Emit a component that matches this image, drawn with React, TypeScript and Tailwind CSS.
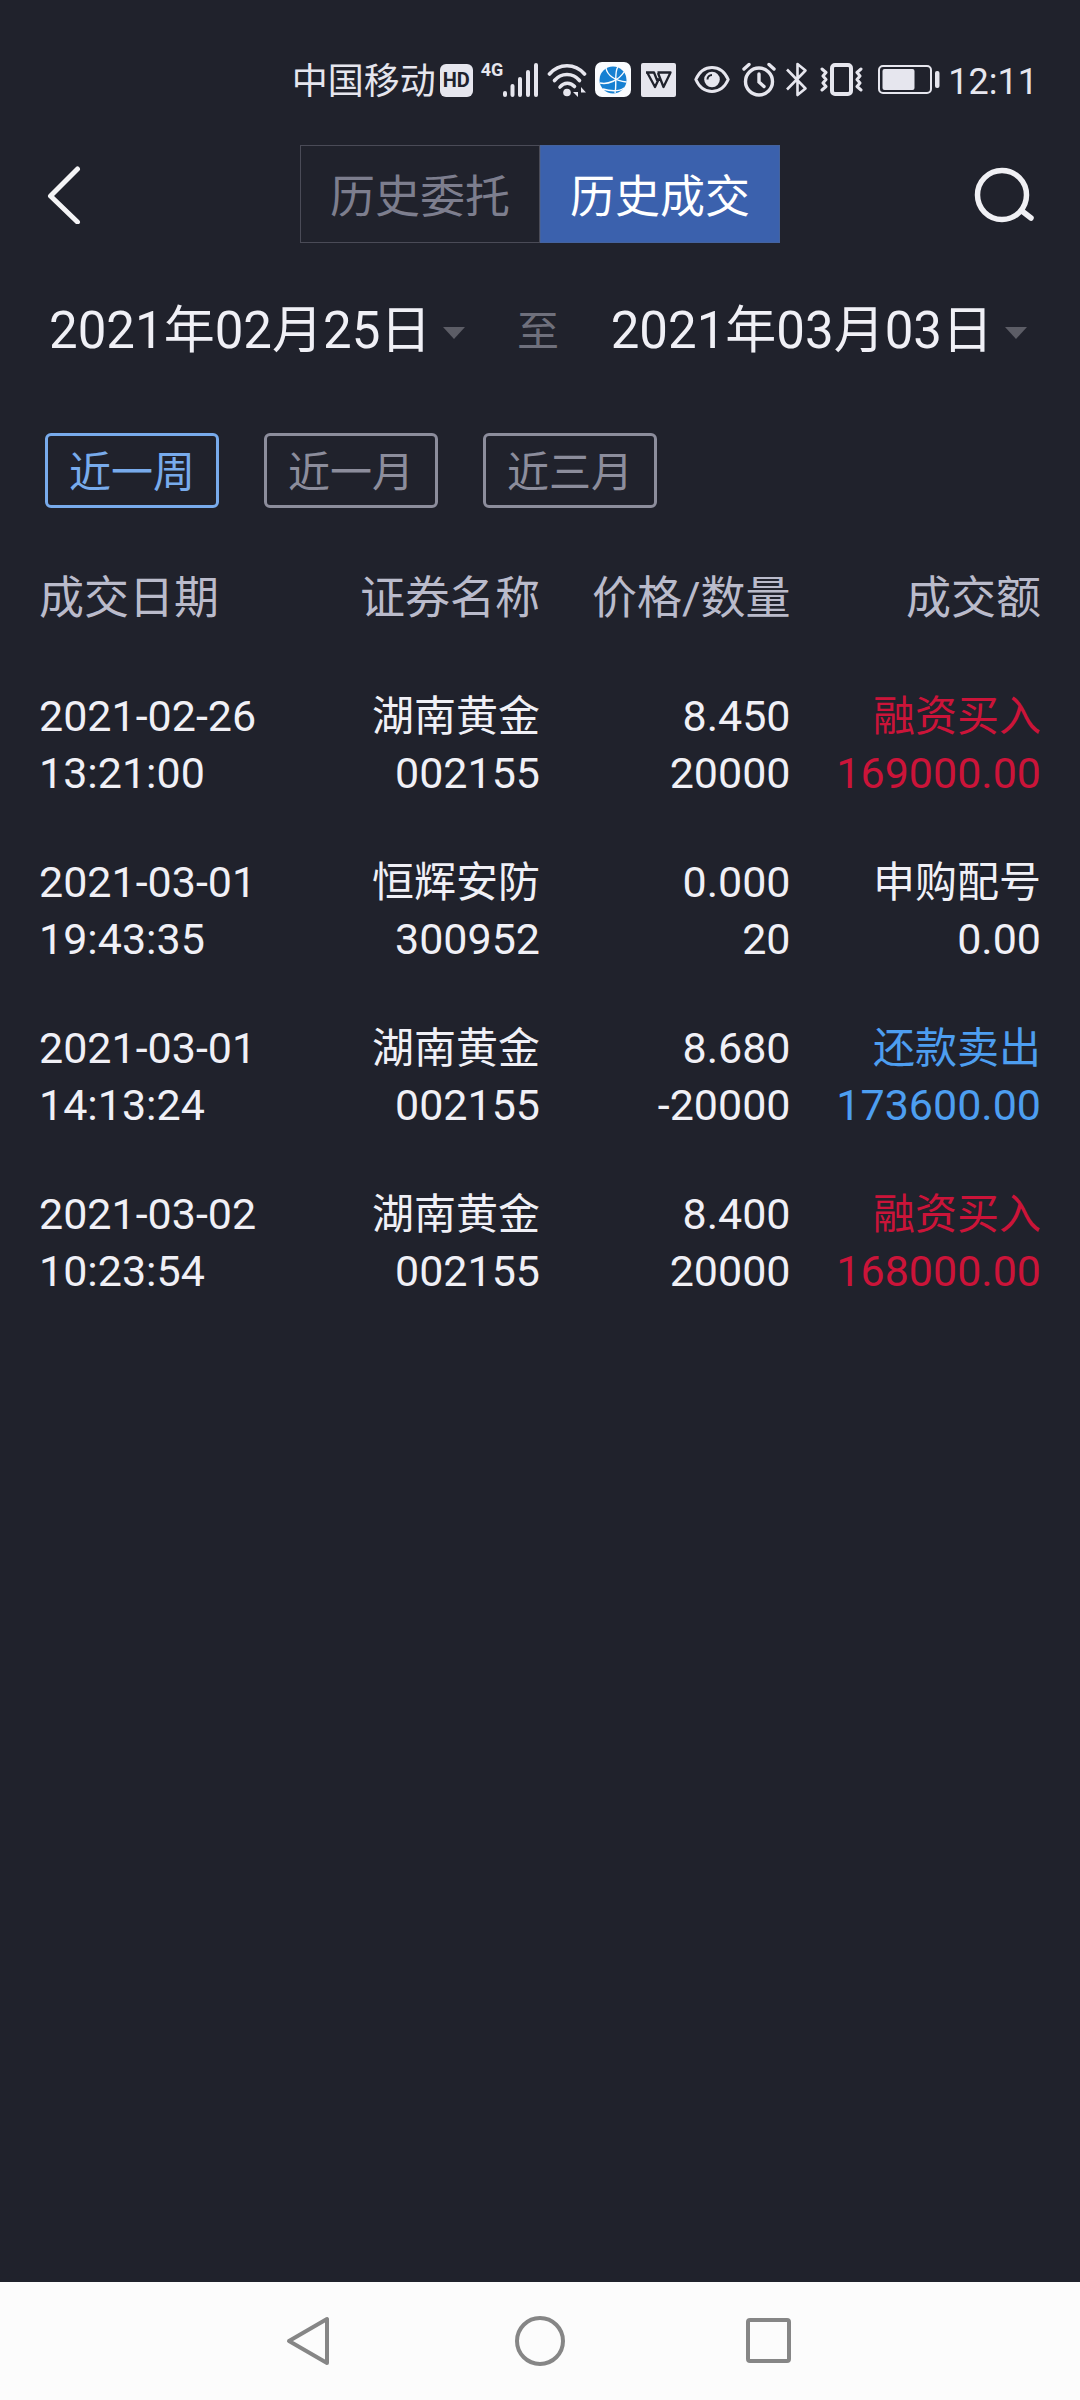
import { useState } from "react";
import clsx from "clsx";

type Tone = "buy" | "sell" | "plain";

interface Deal {
  date: string;
  time: string;
  name: string;
  code: string;
  price: string;
  count: string;
  action: string;
  amount: string;
  tone: Tone;
}

const deals: Deal[] = [
  { date: "2021-02-26", time: "13:21:00", name: "湖南黄金", code: "002155", price: "8.450", count: "20000", action: "融资买入", amount: "169000.00", tone: "buy" },
  { date: "2021-03-01", time: "19:43:35", name: "恒辉安防", code: "300952", price: "0.000", count: "20", action: "申购配号", amount: "0.00", tone: "plain" },
  { date: "2021-03-01", time: "14:13:24", name: "湖南黄金", code: "002155", price: "8.680", count: "-20000", action: "还款卖出", amount: "173600.00", tone: "sell" },
  { date: "2021-03-02", time: "10:23:54", name: "湖南黄金", code: "002155", price: "8.400", count: "20000", action: "融资买入", amount: "168000.00", tone: "buy" },
];

const toneClass: Record<Tone, string> = {
  buy: "text-[#cb1439]",
  sell: "text-[#4d9ef0]",
  plain: "text-[#f0f0f6]",
};

const tabs = ["历史委托", "历史成交"];
const ranges = ["近一周", "近一月", "近三月"];

const StatusBar = () => (
  <div className="flex h-16 items-center justify-end pr-[42px] text-4xl text-[#e6e6ee]">
    <span className="pt-1">中国移动</span>
    <span className="ml-1 flex h-[33px] w-[33px] items-center justify-center rounded-md bg-[#e6e6ee] text-xl font-bold text-[#20222c]">
      HD
    </span>
    <span className="mb-5 ml-2 text-lg leading-5 font-bold">4G</span>

    {/* signal */}
    <svg className="h-10 w-9" viewBox="0 0 36 40" fill="currentColor" aria-hidden="true">
      <rect x="0" y="31" width="4" height="6" rx="2" />
      <rect x="7.5" y="24" width="4" height="13" rx="2" />
      <rect x="15" y="17" width="4" height="20" rx="2" />
      <rect x="23" y="10" width="4" height="27" rx="2" />
      <rect x="31" y="3" width="4" height="34" rx="2" />
    </svg>

    {/* wifi */}
    <svg className="ml-2 h-10 w-10" viewBox="0 0 40 40" fill="none" stroke="currentColor" strokeWidth="3.6" strokeLinecap="round" aria-hidden="true">
      <path d="M2.5 14C12 3 28 3 37.5 14" />
      <path d="M7.5 20.5C14 12.5 26 12.5 32.5 20.5" />
      <path d="M13 27C17 22 23.5 22 27.5 26.5" />
      <circle cx="20" cy="32.5" r="3.8" fill="currentColor" stroke="none" />
      <path d="M31 28v9l-5-5h5zM34 37v-10l5 5.5h-5z" fill="currentColor" stroke="none" />
    </svg>

    {/* browser */}
    <svg className="ml-2 h-10 w-9" viewBox="0 0 36 40" fill="none" aria-hidden="true">
      <rect y="2" width="36" height="35" rx="7" fill="#fafcff" />
      <circle cx="18" cy="20" r="13.5" fill="#1680d2" />
      <path d="M11 8C12 15 20 21 31.5 22M23 7C19 11 22 24 20 33M5 23C13 25 24 20 29 12M8 29C14 31 24 32 29 28" stroke="#fafcff" strokeWidth="1.4" />
    </svg>

    {/* office */}
    <svg className="ml-2.5 h-10 w-[35px]" viewBox="0 0 35 40" fill="none" aria-hidden="true">
      <rect y="3" width="35" height="34" rx="2" fill="#e6e6ee" />
      <path d="M5 12.500h8l4 10M6.500 13L14 27L18 18.500M16.500 12.500h13L22.500 27L17 13" stroke="#20222c" strokeWidth="2.3" strokeLinejoin="round" />
    </svg>

    {/* eye comfort */}
    <svg className="ml-[18px] h-10 w-9" viewBox="0 0 36 40" fill="none" stroke="currentColor" strokeWidth="3" aria-hidden="true">
      <path d="M1.8 19.5C9 3.5 27 3.5 34.2 19.5C27 35.5 9 35.5 1.8 19.5Z" strokeLinejoin="round" />
      <circle cx="18" cy="19.5" r="7.8" fill="currentColor" stroke="none" />
      <path d="M13.5 19.5a4.5 4.5 0 0 1 4.5-4.5" stroke="#20222c" strokeWidth="2" />
    </svg>

    {/* alarm */}
    <svg className="ml-3 h-10 w-[34px]" viewBox="0 0 34 40" fill="none" stroke="currentColor" strokeWidth="3.4" strokeLinecap="round" aria-hidden="true">
      <circle cx="17" cy="21.5" r="13.5" />
      <path d="M17 14v8l5 4.5" />
      <path d="M2 9l5-4.5M32 9l-5-4.5" />
    </svg>

    {/* bluetooth */}
    <svg className="ml-2.5 h-10 w-[22px]" viewBox="0 0 22 40" fill="none" stroke="currentColor" strokeWidth="2.6" strokeLinejoin="round" aria-hidden="true">
      <path d="M1 9.5L19.5 28.5L11.5 35V4L19.5 10.5L1 29.5" />
    </svg>

    {/* vibrate */}
    <svg className="ml-3 h-10 w-[44px]" viewBox="0 0 44 40" fill="none" stroke="currentColor" strokeLinejoin="round" strokeLinecap="round" aria-hidden="true">
      <rect x="12" y="5" width="19" height="29" rx="3" strokeWidth="4" />
      <path d="M2 9l4 3.500-3 3.500 3 3.500-3 3.500 3 3.500-4 3.500M41 9l-4 3.500 3 3.500-3 3.500 3 3.500-3 3.500 4 3.500" strokeWidth="3" />
    </svg>

    {/* battery */}
    <svg className="ml-3.5 h-10 w-[62px]" viewBox="0 0 62 40" fill="none" aria-hidden="true">
      <rect x="1" y="6" width="52" height="27" rx="4" stroke="currentColor" strokeWidth="2" />
      <rect x="4.5" y="9" width="32" height="21" rx="2" fill="currentColor" />
      <rect x="57" y="11" width="4.5" height="17" rx="2" fill="currentColor" />
    </svg>
    <span className="ml-2 pt-1">12:11</span>
  </div>
);

const DateButton = ({ label }: { label: string }) => (
  <button type="button" className="flex items-center gap-3 text-[51px] leading-[60px] text-[#f0f0f6]">
    {label}
    <svg className="mt-1 h-3 w-[22px]" viewBox="0 0 22 12" fill="#5c5d66" aria-hidden="true">
      <path d="M0 0h22L11 12z" />
    </svg>
  </button>
);

const DealTable = () => (
  <table className="mt-7 w-full table-fixed text-right">
    <thead>
      <tr className="h-[126px] text-[45px] leading-[60px] text-[#babbcb]">
        <th className="text-left font-normal">成交日期</th>
        <th className="font-normal">证券名称</th>
        <th className="font-normal">价格/数量</th>
        <th className="font-normal">成交额</th>
      </tr>
    </thead>
    <tbody className="text-[43px] leading-[57px] text-[#f0f0f6]">
      {deals.map((deal) => (
        <tr key={deal.date + deal.time} className="h-[166px]">
          <td className="text-left whitespace-nowrap">
            <div>{deal.date}</div>
            <div>{deal.time}</div>
          </td>
          <td>
            <div className="text-[42px]">{deal.name}</div>
            <div>{deal.code}</div>
          </td>
          <td>
            <div>{deal.price}</div>
            <div>{deal.count}</div>
          </td>
          <td className={toneClass[deal.tone]}>
            <div className="text-[42px]">{deal.action}</div>
            <div>{deal.amount}</div>
          </td>
        </tr>
      ))}
    </tbody>
  </table>
);

const SystemNav = () => (
  <nav className="flex h-[118px] items-center justify-center gap-[180px] bg-[#fcfcfc] text-[#868686]">
    <button type="button" aria-label="返回">
      <svg className="size-[50px]" viewBox="0 0 50 50" fill="none" stroke="currentColor" strokeWidth="4" strokeLinejoin="round">
        <path d="M42 3v44L4 25z" />
      </svg>
    </button>
    <button type="button" aria-label="主页">
      <svg className="size-[50px]" viewBox="0 0 50 50" fill="none" stroke="currentColor" strokeWidth="4">
        <circle cx="25" cy="25" r="23" />
      </svg>
    </button>
    <button type="button" aria-label="最近任务">
      <svg className="size-[50px]" viewBox="0 0 50 50" fill="none" stroke="currentColor" strokeWidth="4">
        <rect x="3" y="4" width="41" height="41" rx="2" />
      </svg>
    </button>
  </nav>
);

export default function App() {
  const [tab, setTab] = useState("历史成交");
  const [range, setRange] = useState("近一周");

  return (
    <div className="flex min-h-screen flex-col bg-[#20222c] pt-12 font-[Roboto,'Noto_Sans_CJK_SC',sans-serif]">
      <StatusBar />

      <header className="mt-[33px] flex items-center justify-between px-11">
        <button type="button" aria-label="返回">
          <svg className="h-[60px] w-16" viewBox="0 0 64 60" fill="none" stroke="#f4f4f6" strokeWidth="5" strokeLinecap="round" strokeLinejoin="round">
            <path d="M33.5 5L6.5 32L33.5 58" />
          </svg>
        </button>
        <div className="flex">
          {tabs.map((label) => (
            <button
              key={label}
              type="button"
              aria-pressed={tab === label}
              onClick={() => setTab(label)}
              className={clsx(
                "h-[98px] w-60 border pt-2 text-[45px]",
                tab === label
                  ? "border-[#44639f] bg-[#3b61ad] text-white"
                  : "border-[#4a4b57] text-[#7d7e8e]"
              )}
            >
              {label}
            </button>
          ))}
        </div>
        <button type="button" aria-label="搜索">
          <svg className="h-[60px] w-16" viewBox="0 0 64 60" fill="none" stroke="#f0f0f4" strokeWidth="5.5" strokeLinecap="round">
            <circle cx="30" cy="31" r="24.5" />
            <path d="M50 47L59 54" />
          </svg>
        </button>
      </header>

      <main className="flex-1 px-[39px]">
        <div className="mt-[57px] flex items-center justify-between pr-3.5 pl-2.5">
          <DateButton label="2021年02月25日" />
          <span className="pt-0.5 text-[42px] leading-[60px] text-[#6f707c]">至</span>
          <DateButton label="2021年03月03日" />
        </div>

        <div className="mt-[71px] flex gap-[45px] pl-1.5">
          {ranges.map((label) => (
            <button
              key={label}
              type="button"
              aria-pressed={range === label}
              onClick={() => setRange(label)}
              className={clsx(
                "h-[75px] w-[174px] rounded-md border-3 pt-1 text-[42px] leading-[60px]",
                range === label
                  ? "border-[#78abec] text-[#78abec]"
                  : "border-[#8c8d9c] text-[#8c8d9c]"
              )}
            >
              {label}
            </button>
          ))}
        </div>

        <DealTable />
      </main>

      <SystemNav />
    </div>
  );
}
